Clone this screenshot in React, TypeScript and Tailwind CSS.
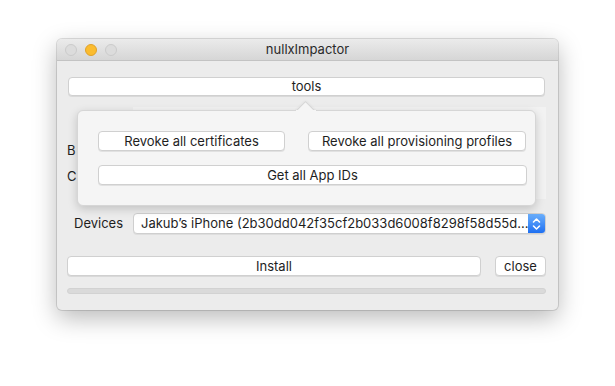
import React from "react";

const font = "font-['Inter','Helvetica_Neue','Liberation_Sans',Arial,sans-serif]";

const MacButton = ({ label, className = "" }: { label: string; className?: string }) => (
  <div
    className={`flex items-center justify-center rounded-[4px] bg-white border border-[#d0d0d0] shadow-[0_1px_0_rgba(0,0,0,0.08)] text-[13px] text-[#1e1e1e] leading-none ${className}`}
  >
    {label}
  </div>
);

const Light = ({ color }: { color: string }) => (
  <div className={`w-[12px] h-[12px] rounded-full border ${color}`} />
);

export default function App() {
  return (
    <div className={`w-[615px] h-[386px] bg-white pt-[39px] pl-[57px] ${font}`}>
      <div className="relative w-[501px] h-[271px] rounded-[5px] bg-[#ececec] shadow-[0_8px_24px_rgba(0,0,0,0.28),0_0_0_1px_rgba(0,0,0,0.12)]">
        {/* title bar */}
        <div className="relative h-[22px] flex items-center rounded-t-[5px] bg-gradient-to-b from-[#ebebeb] to-[#d6d6d6] border-b border-[#c3c3c3]">
          <div className="flex gap-[8px] pl-[8px]">
            <Light color="bg-[#dcdcdc] border-[#cbcbcb]" />
            <Light color="bg-[#fbbc2f] border-[#e0a22a]" />
            <Light color="bg-[#dcdcdc] border-[#cbcbcb]" />
          </div>
          <div className="absolute inset-0 flex items-center justify-center text-[13px] text-[#2a2a2a]">
            nullxImpactor
          </div>
        </div>

        {/* body */}
        <div className="flex flex-col pl-[10px] pr-[12px]">
          <MacButton label="tools" className="mt-[16px] ml-[1px] h-[19px] w-[477px]" />

          <div className="flex h-[117px]">
            <div className="flex flex-col w-[66px] pt-[46px] gap-[10px] text-[13px] leading-[16px] text-[#1e1e1e]">
              <span>B</span>
              <span>C</span>
            </div>
            <div className="mt-[11px] h-[92px] flex-1 bg-[#f2f2f2]" />
          </div>

          <div className="flex items-center h-[21px]">
            <span className="w-[66px] pl-[7px] text-[13px] text-[#1e1e1e]">Devices</span>
            <div className="flex flex-1 h-[21px] rounded-[4px] bg-white border border-[#cfcfcf] shadow-[0_1px_0_rgba(0,0,0,0.06)] overflow-hidden">
              <div className="flex-1 flex items-center pl-[7px] text-[13px] text-[#1e1e1e] whitespace-nowrap overflow-hidden">
                Jakub’s iPhone (2b30dd042f35cf2b033d6008f8298f58d55d...
              </div>
              <div className="w-[17px] flex items-center justify-center bg-gradient-to-b from-[#6aaefb] to-[#1d6ff1]">
                <svg width="9" height="14" viewBox="0 0 9 14" fill="none" stroke="white" strokeWidth="1.6" strokeLinecap="round" strokeLinejoin="round">
                  <path d="M1.5 5 L4.5 2 L7.5 5" />
                  <path d="M1.5 9 L4.5 12 L7.5 9" />
                </svg>
              </div>
            </div>
          </div>

          <div className="flex items-center gap-[14px] mt-[22px]">
            <MacButton label="Install" className="h-[20px] w-[414px]" />
            <MacButton label="close" className="h-[20px] w-[51px]" />
          </div>

          <div className="mt-[12px] h-[6px] rounded-full bg-[#dadada] border border-[#d2d2d2]" />
        </div>

        {/* popover */}
        <div className="absolute left-[20px] top-[71px] w-[459px] h-[96px]">
          <div className="absolute left-[218px] top-[-10px] w-[22px] h-[11px] overflow-hidden">
            <div className="absolute left-[3px] top-[4px] w-[15px] h-[15px] rotate-45 bg-[#f5f5f5] border border-[#d4d4d4] shadow-[0_0_3px_rgba(0,0,0,0.08)]" />
          </div>
          <div className="w-full h-full rounded-[6px] bg-[#f5f5f5] border border-[#d6d6d6] shadow-[0_3px_10px_rgba(0,0,0,0.18)] flex flex-col gap-[14px] pt-[20px] pl-[20px] pr-[9px]">
            <div className="flex justify-between">
              <MacButton label="Revoke all certificates" className="h-[20px] w-[187px]" />
              <MacButton label="Revoke all provisioning profiles" className="h-[20px] w-[218px]" />
            </div>
            <MacButton label="Get all App IDs" className="h-[20px] w-[429px]" />
          </div>
          <div className="absolute left-[219px] top-[0px] w-[20px] h-[2px] bg-[#f5f5f5]" />
        </div>
      </div>
    </div>
  );
}
